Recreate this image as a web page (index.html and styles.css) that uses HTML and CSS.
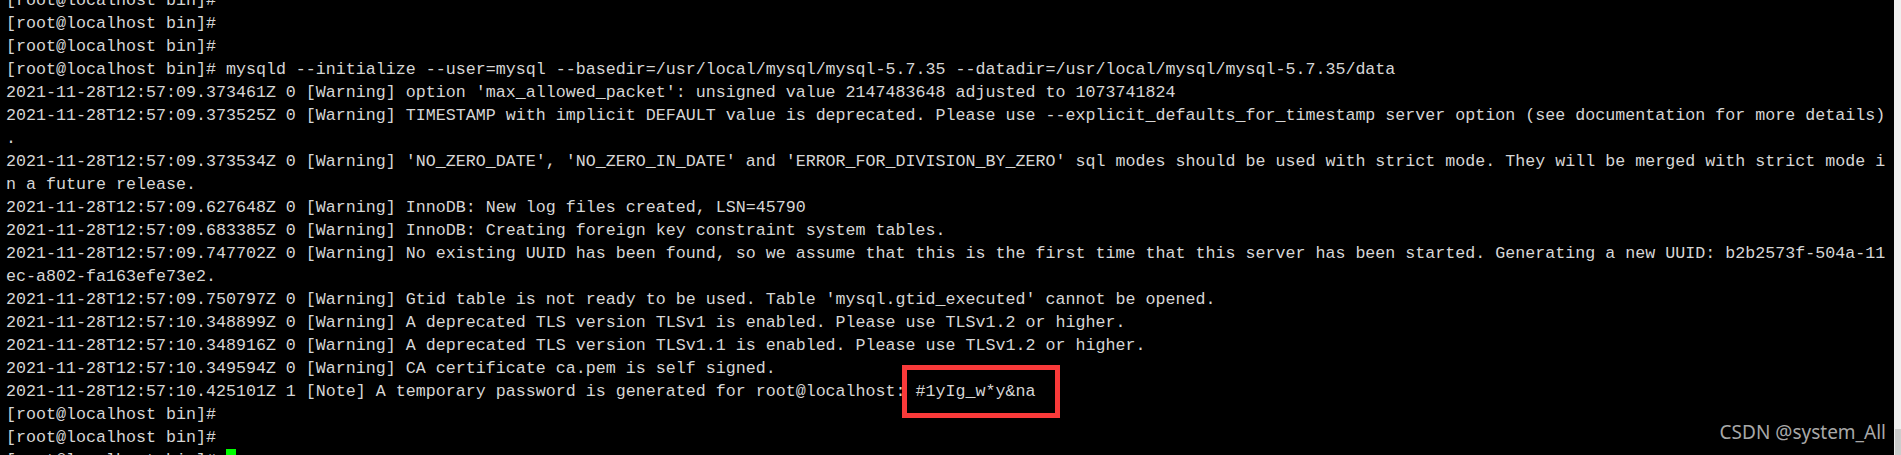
FILE: index.html
```html
<!DOCTYPE html>
<html lang="en">
<head>
<meta charset="utf-8">
<title>Terminal</title>
<link rel="stylesheet" href="styles.css">
</head>
<body>
<div class="screen">
  <div class="term">
    <div class="line">[root@localhost bin]#</div>
    <div class="line">[root@localhost bin]#</div>
    <div class="line">[root@localhost bin]#</div>
    <div class="line">[root@localhost bin]# mysqld --initialize --user=mysql --basedir=/usr/local/mysql/mysql-5.7.35 --datadir=/usr/local/mysql/mysql-5.7.35/data</div>
    <div class="line">2021-11-28T12:57:09.373461Z 0 [Warning] option 'max_allowed_packet': unsigned value 2147483648 adjusted to 1073741824</div>
    <div class="line">2021-11-28T12:57:09.373525Z 0 [Warning] TIMESTAMP with implicit DEFAULT value is deprecated. Please use --explicit_defaults_for_timestamp server option (see documentation for more details)</div>
    <div class="line">.</div>
    <div class="line">2021-11-28T12:57:09.373534Z 0 [Warning] 'NO_ZERO_DATE', 'NO_ZERO_IN_DATE' and 'ERROR_FOR_DIVISION_BY_ZERO' sql modes should be used with strict mode. They will be merged with strict mode i</div>
    <div class="line">n a future release.</div>
    <div class="line">2021-11-28T12:57:09.627648Z 0 [Warning] InnoDB: New log files created, LSN=45790</div>
    <div class="line">2021-11-28T12:57:09.683385Z 0 [Warning] InnoDB: Creating foreign key constraint system tables.</div>
    <div class="line">2021-11-28T12:57:09.747702Z 0 [Warning] No existing UUID has been found, so we assume that this is the first time that this server has been started. Generating a new UUID: b2b2573f-504a-11</div>
    <div class="line">ec-a802-fa163efe73e2.</div>
    <div class="line">2021-11-28T12:57:09.750797Z 0 [Warning] Gtid table is not ready to be used. Table 'mysql.gtid_executed' cannot be opened.</div>
    <div class="line">2021-11-28T12:57:10.348899Z 0 [Warning] A deprecated TLS version TLSv1 is enabled. Please use TLSv1.2 or higher.</div>
    <div class="line">2021-11-28T12:57:10.348916Z 0 [Warning] A deprecated TLS version TLSv1.1 is enabled. Please use TLSv1.2 or higher.</div>
    <div class="line">2021-11-28T12:57:10.349594Z 0 [Warning] CA certificate ca.pem is self signed.</div>
    <div class="line">2021-11-28T12:57:10.425101Z 1 [Note] A temporary password is generated for root@localhost: <span class="mark">#1yIg_w*y&amp;na</span></div>
    <div class="line">[root@localhost bin]#</div>
    <div class="line">[root@localhost bin]#</div>
    <div class="line">[root@localhost bin]# <span class="cursor"></span></div>
  </div>
  <div class="scrollbar"><div class="thumb"></div></div>
  <div class="watermark">CSDN @system_All</div>
</div>
</body>
</html>
```

FILE: styles.css
```css
html, body {
  margin: 0;
  padding: 0;
  background: #000;
}

.screen {
  position: relative;
  display: flex;
  width: 1901px;
  height: 455px;
  overflow: hidden;
  background: #000;
}

.term {
  flex: 1;
  margin-top: -11px;
  padding-left: 6px;
  font-family: "Liberation Mono", monospace;
  font-size: 16.6667px;
  line-height: 23px;
  color: #d6d6d6;
}

.line {
  height: 23px;
  white-space: pre;
}

.mark {
  position: relative;
}

.mark::after {
  content: "";
  position: absolute;
  left: -14px;
  top: -17px;
  width: 148px;
  height: 43px;
  border: 5px solid #f93a3a;
}

.cursor {
  display: inline-block;
  width: 10px;
  height: 23px;
  vertical-align: top;
  background: #00ff00;
}

.scrollbar {
  width: 7px;
  display: flex;
  flex-direction: column;
  justify-content: flex-end;
  background: #f0f0f0;
}

.thumb {
  height: 26px;
  margin-left: 1px;
  background: #cdcdcd;
}

.watermark {
  position: absolute;
  right: 15px;
  bottom: 13px;
  font-family: "Noto Sans", "Open Sans", sans-serif;
  font-size: 19px;
  line-height: 19px;
  color: #a8a8a8;
}
```
